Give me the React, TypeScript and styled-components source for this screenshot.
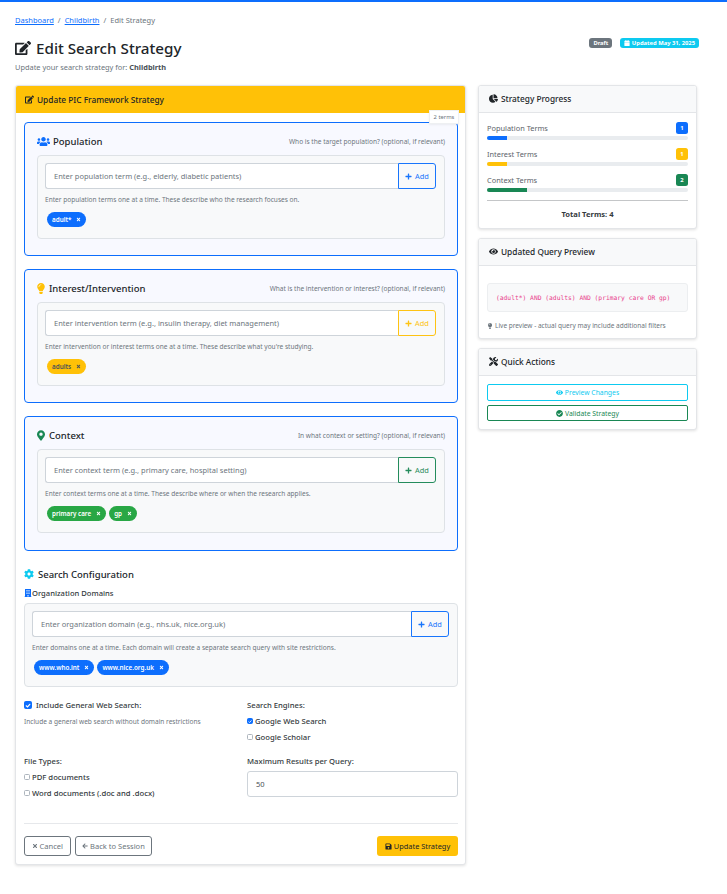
import React from "react";
import styled, { createGlobalStyle } from "styled-components";
import {
  FaEdit, FaUsers, FaLightbulb, FaMapMarkerAlt, FaCog, FaBuilding, FaChartPie, FaEye,
  FaTools, FaPlus, FaTimes, FaSave, FaArrowLeft, FaCheckCircle, FaCalendar,
} from "react-icons/fa";

const BLUE = "#0d6efd";
const YELLOW = "#ffc107";
const GREEN = "#198754";

const Global = createGlobalStyle`
  html, body { margin: 0; padding: 0; background: #fff; }
  body { font-family: "Noto Sans", "Open Sans", sans-serif; color: #212529; }
  * { box-sizing: border-box; }
`;

const Page = styled.div`
  border-top: 2px solid ${BLUE};
  padding: 0 30px 30px 15px;
  min-height: 894px;
  width: 727px;
`;
const Crumbs = styled.nav`
  display: flex; align-items: center; height: 12px; margin-top: 12px;
  font-size: 7.5px; color: #6c757d; gap: 4px;
  a { color: ${BLUE}; text-decoration: underline; }
`;
const TitleRow = styled.div`
  display: flex; justify-content: space-between; align-items: flex-start; margin-top: 10px; height: 49px;
`;
const Title = styled.h1`
  margin: 1px 0 0; font-size: 15.2px; font-weight: 500; line-height: 22px; display: flex; align-items: center; gap: 5px;
`;
const Subtitle = styled.p`
  margin: 3px 0 0; font-size: 7.4px; line-height: 11px; color: #6c757d;
  b { color: #495057; font-weight: 700; }
`;
const Badges = styled.div`
  display: flex; gap: 8px; margin-right: -2px; margin-top: 2px;
`;
const TopBadge = styled.span<{ $bg: string }>`
  height: 10px; padding: 0 4px; border-radius: 3px; background: ${(p) => p.$bg}; color: #fff;
  font-size: 5.8px; font-weight: 700; display: inline-flex; align-items: center; gap: 1.5px; white-space: nowrap;
`;
const Columns = styled.div`
  display: grid; grid-template-columns: 451px 219px; gap: 12px; align-items: start;
`;
const Card = styled.section`
  border: 1px solid #e3e5e8; border-radius: 3px; background: #fff; box-shadow: 0 1px 3px rgba(0,0,0,.12);
  position: relative;
`;
const CardHead = styled.header<{ $warn?: boolean }>`
  height: 27px; display: flex; align-items: center; gap: 3px;
  padding: 0 ${(p) => (p.$warn ? 9 : 10)}px 1px; font-size: 8.3px; font-weight: 500;
  background: ${(p) => (p.$warn ? YELLOW : "#f8f9fa")};
  border-bottom: ${(p) => (p.$warn ? "none" : "1px solid #e3e5e8")};
  border-radius: 2px 2px 0 0;
  color: #212529;
`;
const MainBody = styled.div`
  padding: 9px 7px 8px 8px;
`;
const Stack = styled.div`
  display: flex; flex-direction: column; gap: 13px;
`;
const TermsTag = styled.span`
  position: absolute; right: 6px; top: 24px; width: 30px; height: 14px; background: #fff;
  border: 1px solid #eef0f2; font-size: 5.8px; color: #6c757d; display: flex; align-items: center; justify-content: center;
  box-shadow: 0 1px 2px rgba(0,0,0,.06);
`;
const Section = styled.div<{ $h: number }>`
  height: ${(p) => p.$h}px; border: 1px solid ${BLUE}; border-radius: 4px; background: #f8f9ff;
  padding: 4px 12px 0;
`;
const SectionHead = styled.div`
  display: flex; justify-content: space-between; align-items: center; height: 28px;
`;
const SectionTitle = styled.h5`
  margin: 0; font-size: 9.5px; font-weight: 500; display: flex; align-items: center; gap: 3px; color: #212529;
`;
const Bulb = styled(FaLightbulb)`
  width: 8px; height: 11px; margin-right: 1px;
`;
const Marker = styled(FaMapMarkerAlt)`
  width: 8px; height: 11px; margin-right: 1px;
`;
const Hint = styled.small`
  font-size: 6.55px; color: #6c757d;
`;
const Box = styled.div`
  height: 84px; border: 1px solid #dee2e6; border-radius: 4px; background: #f8f9fa; padding: 7px 8px 7px 7px;
`;
const InputRow = styled.div`
  display: flex; height: 26px;
`;
const Field = styled.div`
  flex: 1; background: #fff; border: 1px solid #ced4da; border-right: none; border-radius: 3px 0 0 3px;
  display: flex; align-items: center; padding: 0 8px; font-size: 7.5px; color: #6c757d;
`;
const AddBtn = styled.span<{ $c: string }>`
  width: 38px; border: 1px solid ${(p) => p.$c}; border-radius: 0 3px 3px 0; color: ${(p) => p.$c};
  display: flex; align-items: center; justify-content: center; gap: 3px; font-size: 7.4px; opacity: .95;
`;
const Help = styled.div`
  font-size: 6.55px; color: #6c757d; margin-top: 6px; height: 10px; line-height: 10px;
`;
const Pills = styled.div`
  display: flex; gap: 3px; margin-top: 7px; padding-left: 2px;
`;
const Pill = styled.span<{ $bg: string; $fg: string }>`
  height: 15px; border-radius: 8px; padding: 0 5px; background: ${(p) => p.$bg}; color: ${(p) => p.$fg};
  display: inline-flex; align-items: center; gap: 5px; font-size: 6.3px; font-weight: 600;
`;
const ConfigTitle = styled.h5`
  margin: 16px 0 0; height: 14px; font-size: 9.5px; font-weight: 500; display: flex; align-items: center; gap: 4px;
`;
const ConfigLabel = styled.div`
  margin: 6px 0 4px; height: 12px; font-size: 7.6px; font-weight: 500; color: #343a40; display: flex; align-items: center; gap: 0;
`;
const ConfigGrid = styled.div`
  display: grid; grid-template-columns: 223px 211px; grid-template-rows: 56px 42px; margin-top: 12px;
`;
const Label = styled.div`
  font-size: 7.7px; height: 12px; line-height: 12px; color: #343a40; font-weight: 500; display: flex; align-items: center; gap: 4px;
`;
const Check = styled.span<{ $on?: boolean; $s?: number }>`
  width: ${(p) => p.$s ?? 6}px; height: ${(p) => p.$s ?? 6}px; border-radius: 1.5px;
  border: 1px solid ${(p) => (p.$on ? BLUE : "#adb5bd")}; background: ${(p) => (p.$on ? BLUE : "#fff")};
  display: inline-flex; align-items: center; justify-content: center; flex: none;
`;
const Options = styled.div`
  margin-top: 2px;
`;
const Option = styled(Label)`
  height: 16px; line-height: 16px; gap: 2px;
`;
const Desc = styled.div`
  font-size: 6.55px; margin-top: 6px; height: 10px; line-height: 10px; color: #6c757d;
`;
const NumberField = styled.div`
  height: 26px; margin-top: 4px; border: 1px solid #ced4da; border-radius: 3px; background: #fff;
  padding: 0 8px; display: flex; align-items: center; font-size: 7.5px; color: #495057;
`;
const Divider = styled.hr`
  border: none; border-top: 1px solid #e6e8eb; margin: 26px 0 12px;
`;
const Actions = styled.div`
  display: flex; justify-content: space-between;
`;
const BtnGroup = styled.div`
  display: flex; gap: 4px;
`;
const OutlineBtn = styled.span`
  height: 20px; padding: 0 6.5px; border: 1px solid #6c757d; border-radius: 3px; color: #6c757d; font-size: 7.55px;
  display: inline-flex; align-items: center; gap: 2px;
`;
const SaveBtn = styled.span`
  height: 20px; width: 81px; justify-content: center; border-radius: 3px; background: ${YELLOW}; color: #212529; font-size: 7.4px;
  display: inline-flex; align-items: center; gap: 2px;
`;
const Side = styled.aside`
  display: flex; flex-direction: column; gap: 9px;
`;
const SideBody = styled.div<{ $h: number }>`
  padding: 8px 8px 0; height: ${(p) => p.$h}px;
`;
const ProgList = styled.div`
  padding-top: 1px;
`;
const ProgRow = styled.div`
  margin-bottom: 8px;
`;
const ProgHead = styled.div`
  display: flex; justify-content: space-between; align-items: center; height: 12px;
  font-size: 7.4px; color: #5c636a;
`;
const Count = styled.span<{ $bg: string }>`
  width: 12px; height: 12px; border-radius: 2.5px; background: ${(p) => p.$bg}; color: #fff; font-size: 5.8px; font-weight: 700;
  display: flex; align-items: center; justify-content: center;
`;
const Track = styled.div`
  height: 4px; background: #e9ecef; border-radius: 2px; overflow: hidden; margin-top: 2px;
`;
const Fill = styled.div<{ $bg: string }>`
  height: 100%; background: ${(p) => p.$bg};
`;
const SideRule = styled.hr`
  border: none; border-top: 1px solid #c4c6c8; margin: 0;
`;
const Total = styled.div`
  text-align: center; font-size: 7.6px; font-weight: 700; color: #343a40; margin-top: 8px;
`;
const CodeBox = styled.div`
  margin-top: 9px; height: 29px; border: 1px solid #eceef0; border-radius: 3px; background: #f8f9fa;
  display: flex; align-items: center; padding: 0 8px;
  font-family: "DejaVu Sans Mono", "Liberation Mono", monospace; font-size: 6.3px; color: #e83e8c; white-space: nowrap;
`;
const Note = styled.div`
  margin-top: 9px; font-size: 6.5px; color: #6c757d; display: flex; align-items: center; gap: 2px; white-space: nowrap;
`;
const WideBtn = styled.span<{ $c: string; $tall?: number }>`
  height: ${(p) => p.$tall ?? 17}px; border: 1px solid ${(p) => p.$c}; border-radius: 2px; color: ${(p) => p.$c}; font-size: 6.8px;
  display: flex; align-items: center; justify-content: center; gap: 2px;
  margin-bottom: 4px;
`;

const Tick = ({ s }: { s: number }) => (
  <svg width={s} height={s} viewBox="0 0 10 10" fill="none" stroke="#fff" strokeWidth="2" strokeLinecap="round">
    <path d="M2 5.5 4.2 7.5 8 3" />
  </svg>
);

const TermSection = ({ h, icon, title, hint, ph, help, color, pills, pillBg, pillFg }: any) => (
  <Section $h={h}>
    <SectionHead>
      <SectionTitle>{icon}{title}</SectionTitle>
      <Hint>{hint} (optional, if relevant)</Hint>
    </SectionHead>
    <Box>
      <InputRow>
        <Field>{ph}</Field>
        <AddBtn $c={color}><FaPlus size={7} />Add</AddBtn>
      </InputRow>
      <Help>{help}</Help>
      <Pills>
        {pills.map((t: string) => (
          <Pill key={t} $bg={pillBg} $fg={pillFg}>{t}<FaTimes size={5} /></Pill>
        ))}
      </Pills>
    </Box>
  </Section>
);

const progress = [
  { label: "Population Terms", n: 1, c: BLUE, w: 10 },
  { label: "Interest Terms", n: 1, c: YELLOW, w: 10 },
  { label: "Context Terms", n: 2, c: GREEN, w: 20 },
];

export default function App() {
  return (
    <Page>
      <Global />
      <Crumbs>
        <a>Dashboard</a><span>/</span><a>Childbirth</a><span>/</span><span>Edit Strategy</span>
      </Crumbs>
      <TitleRow>
        <div>
          <Title><FaEdit size={16} />Edit Search Strategy</Title>
          <Subtitle>Update your search strategy for: <b>Childbirth</b></Subtitle>
        </div>
        <Badges>
          <TopBadge $bg="#6c757d">Draft</TopBadge>
          <TopBadge $bg="#0dcaf0"><FaCalendar size={6} />Updated May 31, 2025</TopBadge>
        </Badges>
      </TitleRow>
      <Columns>
        <Card>
          <CardHead $warn><FaEdit size={9} />Update PIC Framework Strategy</CardHead>
          <TermsTag>2 terms</TermsTag>
          <MainBody>
            <Stack>
              <TermSection h={134} icon={<FaUsers size={13} color={BLUE} />} title="Population"
                hint="Who is the target population?" ph="Enter population term (e.g., elderly, diabetic patients)"
                help="Enter population terms one at a time. These describe who the research focuses on."
                color={BLUE} pills={["adult*"]} pillBg={BLUE} pillFg="#fff" />
              <TermSection h={134} icon={<Bulb color={YELLOW} />} title="Interest/Intervention"
                hint="What is the intervention or interest?" ph="Enter intervention term (e.g., insulin therapy, diet management)"
                help="Enter intervention or interest terms one at a time. These describe what you're studying."
                color={YELLOW} pills={["adults"]} pillBg={YELLOW} pillFg="#495057" />
              <TermSection h={135} icon={<Marker color={GREEN} />} title="Context"
                hint="In what context or setting?" ph="Enter context term (e.g., primary care, hospital setting)"
                help="Enter context terms one at a time. These describe where or when the research applies."
                color={GREEN} pills={["primary care", "gp"]} pillBg="#28a745" pillFg="#fff" />
            </Stack>
            <ConfigTitle><FaCog size={10} color="#0dcaf0" />Search Configuration</ConfigTitle>
            <ConfigLabel><FaBuilding size={8} color={BLUE} />Organization Domains</ConfigLabel>
            <Box>
              <InputRow>
                <Field>Enter organization domain (e.g., nhs.uk, nice.org.uk)</Field>
                <AddBtn $c={BLUE}><FaPlus size={7} />Add</AddBtn>
              </InputRow>
              <Help>Enter domains one at a time. Each domain will create a separate search query with site restrictions.</Help>
              <Pills>
                <Pill $bg={BLUE} $fg="#fff">www.who.int<FaTimes size={5} /></Pill>
                <Pill $bg={BLUE} $fg="#fff">www.nice.org.uk<FaTimes size={5} /></Pill>
              </Pills>
            </Box>
            <ConfigGrid>
              <div>
                <Label><Check $on $s={8}><Tick s={7} /></Check>Include General Web Search:</Label>
                <Desc>Include a general web search without domain restrictions</Desc>
              </div>
              <div>
                <Label>Search Engines:</Label>
                <Options>
                  <Option><Check $on><Tick s={5} /></Check>Google Web Search</Option>
                  <Option><Check />Google Scholar</Option>
                </Options>
              </div>
              <div>
                <Label>File Types:</Label>
                <Options>
                  <Option><Check />PDF documents</Option>
                  <Option><Check />Word documents (.doc and .docx)</Option>
                </Options>
              </div>
              <div>
                <Label>Maximum Results per Query:</Label>
                <NumberField>50</NumberField>
              </div>
            </ConfigGrid>
            <Divider />
            <Actions>
              <BtnGroup>
                <OutlineBtn><FaTimes size={6} /> Cancel</OutlineBtn>
                <OutlineBtn><FaArrowLeft size={6} /> Back to Session</OutlineBtn>
              </BtnGroup>
              <SaveBtn><FaSave size={7} /> Update Strategy</SaveBtn>
            </Actions>
          </MainBody>
        </Card>
        <Side>
          <Card>
            <CardHead><FaChartPie size={9} />Strategy Progress</CardHead>
            <SideBody $h={115}>
              <ProgList>
                {progress.map((p) => (
                  <ProgRow key={p.label}>
                    <ProgHead>{p.label}<Count $bg={p.c}>{p.n}</Count></ProgHead>
                    <Track><Fill $bg={p.c} style={{ width: `${p.w}%` }} /></Track>
                  </ProgRow>
                ))}
              </ProgList>
              <SideRule />
              <Total>Total Terms: 4</Total>
            </SideBody>
          </Card>
          <Card>
            <CardHead><FaEye size={9} />Updated Query Preview</CardHead>
            <SideBody $h={72}>
              <CodeBox>(adult*) AND (adults) AND (primary care OR gp)</CodeBox>
              <Note><FaLightbulb size={6} /> Live preview - actual query may include additional filters</Note>
            </SideBody>
          </Card>
          <Card>
            <CardHead><FaTools size={9} />Quick Actions</CardHead>
            <SideBody $h={53}>
              <WideBtn $c="#0dcaf0"><FaEye size={7} />Preview Changes</WideBtn>
              <WideBtn $c={GREEN} $tall={16}><FaCheckCircle size={7} />Validate Strategy</WideBtn>
            </SideBody>
          </Card>
        </Side>
      </Columns>
    </Page>
  );
}
